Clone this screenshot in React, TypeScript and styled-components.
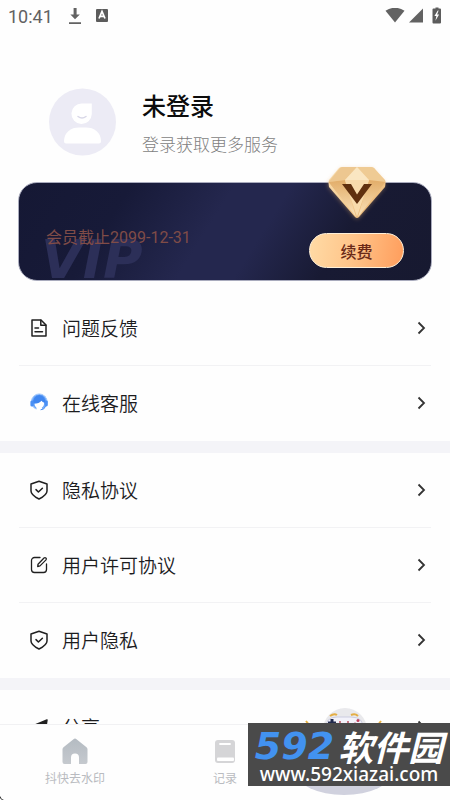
import React from "react";
import styled, { createGlobalStyle } from "styled-components";

const GlobalStyle = createGlobalStyle`
  * { box-sizing: border-box; }
  body {
    margin: 0;
    background: #fefefe;
    color: #1c1c1e;
    font-family: "Noto Sans CJK SC", sans-serif;
  }
  button { font: inherit; color: inherit; border: 0; background: none; padding: 0; cursor: pointer; }
`;

const Shell = styled.div`
  position: relative;
  display: flex;
  flex-direction: column;
  height: 100vh;
  overflow: hidden;
`;

const StatusBar = styled.header`
  display: flex;
  align-items: center;
  justify-content: space-between;
  flex: none;
  height: 32px;
  padding: 0 8px;
  color: #626262;
  font-family: Roboto, sans-serif;
  font-size: 18px;
`;

const StatusGroup = styled.div<{ $gap: number }>`
  display: flex;
  align-items: center;
  gap: ${(p) => p.$gap}px;
  svg { display: block; }
`;

const Content = styled.main`
  flex: 1;
  min-height: 0;
  overflow-y: auto;
  scrollbar-width: none;
`;

const Profile = styled.section`
  display: flex;
  align-items: center;
  gap: 26px;
  padding: 55px 49px 26px;
`;

const Avatar = styled.svg`
  flex: none;
  display: block;
  width: 67px;
  height: 68px;
`;

const ProfileText = styled.div`
  display: flex;
  flex-direction: column;
  gap: 11px;
  padding-top: 2px;
`;

const ProfileName = styled.h1`
  margin: 0;
  font-size: 24px;
  line-height: 32px;
  font-weight: 500;
  color: #0c0c0c;
`;

const ProfileHint = styled.p`
  margin: 0;
  font-size: 17px;
  line-height: 24px;
  font-weight: 300;
  color: #7e7e7e;
`;

const VipCard = styled.section`
  position: relative;
  display: flex;
  align-items: flex-end;
  justify-content: space-between;
  height: 99px;
  margin: 0 18px 10px;
  padding: 0 27px 12px;
  border: 1px solid #a9abbd;
  border-radius: 19px;
  background: linear-gradient(122deg, #151834 0%, #171a38 24%, #24274e 46%, #24274e 58%, #181a33 76%, #171930 100%);
`;

const VipMark = styled.span`
  position: absolute;
  left: 22px;
  bottom: 1px;
  font: italic 700 54px/38px "DejaVu Sans", sans-serif;
  color: #2c2f58;
`;

const Expiry = styled.p`
  position: relative;
  margin: 0 0 20px;
  font-family: Roboto, "Noto Sans CJK SC", sans-serif;
  font-size: 16px;
  line-height: 20px;
  color: #804c47;
`;

const RenewButton = styled.button`
  && {
    width: 95px;
    height: 35px;
    border: 1px solid #fff0d8;
    border-radius: 18px;
    background: linear-gradient(100deg, #ffdba6, #ffc58a 45%, #ff9d5c);
    color: #6b2a18;
    font-size: 16px;
    line-height: 32px;
    font-weight: 500;
  }
`;

const Diamond = styled.svg`
  position: absolute;
  top: -20px;
  right: 41px;
  width: 66px;
  height: 60px;
`;

const Group = styled.section`
  border-bottom: 12px solid #f4f4f8;
  &:last-child { border-bottom: 0; }
`;

const Row = styled.button`
  && {
    display: flex;
    align-items: center;
    gap: 14px;
    width: calc(100% - 38px);
    height: 75px;
    margin: 0 19px;
    padding: 0 5px 0 11px;
    border-bottom: 1px solid #f2f2f4;
    text-align: left;
  }
  &&:last-child { border-bottom-color: transparent; }
`;

const RowIcon = styled.svg`
  flex: none;
  width: 18px;
  height: 20px;
  fill: none;
  stroke: #202020;
  stroke-width: 1.5;
  stroke-linecap: round;
  stroke-linejoin: round;
`;

const RowLabel = styled.span`
  flex: 1;
  font-size: 19px;
  line-height: 26px;
  font-weight: 350;
`;

const Chevron = styled.svg`
  flex: none;
  width: 9px;
  height: 14px;
  fill: none;
  stroke: #333;
  stroke-width: 1.8;
`;

const TabBar = styled.nav`
  display: grid;
  grid-template-columns: repeat(3, 1fr);
  flex: none;
  height: 76px;
  border-top: 1px solid #f1f1f3;
  background: #fefefe;
`;

const Tab = styled.button`
  && {
    position: relative;
    display: flex;
    flex-direction: column;
    align-items: center;
    gap: 4px;
    padding-top: 12px;
    color: #b9bbc0;
    font-size: 12px;
    line-height: 18px;
  }
`;

const TabIcon = styled.svg`
  display: block;
  width: 28px;
  height: 28px;
`;

const Mascot = styled.svg`
  position: absolute;
  top: -21px;
  left: 50%;
  width: 100px;
  height: 92px;
  margin-left: -80px;
`;

const Watermark = styled.aside`
  position: absolute;
  right: 0;
  bottom: 14px;
  display: flex;
  flex-direction: column;
  align-items: center;
  width: 202px;
  height: 63px;
  padding-top: 7px;
  background: #4a4a4a;
  color: #fff;
  white-space: nowrap;
`;

const Brand = styled.div`
  display: flex;
  align-items: center;
  gap: 4px;
  height: 32px;
  font: italic 700 35px/32px "Noto Sans CJK SC", sans-serif;
`;

const BrandDigits = styled.span`
  color: #4292f0;
  font: italic 700 38px/32px "DejaVu Sans", sans-serif;
`;

const BrandUrl = styled.div`
  font: 500 19px/24px "Noto Sans", sans-serif;
`;

const Corner = styled.svg`
  position: absolute;
  left: 0;
  bottom: 0;
  width: 4px;
  height: 4px;
`;

type IconName = "doc" | "service" | "shield" | "edit" | "share";

function ItemIcon({ name }: { name: IconName }) {
  return (
    <RowIcon viewBox="0 0 18 20" aria-hidden="true">
      {name === "doc" && (
        <>
          <path d="M2 2h9l5 5v11H2z" />
          <path d="M10.800 2.200v5h5M5 10h3.500M5 13.700h7.500" />
        </>
      )}
      {name === "shield" && (
        <>
          <path d="M9 1.200 17 4v7c0 3.600-3.600 5.800-8 8-4.400-2.200-8-4.400-8-8V4z" />
          <path d="m6 9.600 2.400 2.400 4-3.800" />
        </>
      )}
      {name === "edit" && (
        <>
          <path strokeWidth="1.300" d="M10 2.500H4.500A3 3 0 0 0 1.500 5.500v9a3 3 0 0 0 3 3h9a3 3 0 0 0 3-3V9" />
          <path strokeWidth="1.300" d="m8 9.200 6-6.200q1-.8 1.900 0t.1 1.900l-6 6-2.300.6z" />
        </>
      )}
      {name === "service" && (
        <>
          <circle cx="9.300" cy="8.800" r="7.900" fill="#6ba6f8" stroke="#a9ccfb" strokeWidth="1" />
          <path d="M3.300 10.500a6.200 6.800 0 1 1 12 0z" fill="#3f86f0" stroke="none" />
          <rect x=".4" y="7.500" width="3.200" height="6" rx="1.500" fill="#4a90f5" stroke="none" />
          <rect x="14.900" y="7.500" width="2.900" height="6" rx="1.400" fill="#4a90f5" stroke="none" />
          <path d="M4.500 10.700q4.500 0 7-2.900 1 1.500 2.800 2-.2 3.700-2.500 5l.8 3.500q-3.500 1.300-6.500-.2l.5-3Q4.700 13.600 4.500 10.700z" fill="#fff" stroke="none" />
          <path d="M15.500 13.500q-1 3.300-4.500 3.300" stroke="#4a90f5" strokeWidth="1" />
        </>
      )}
      {name === "share" && (
        <path d="M17 3 2 9.200l4.500 2L15 5 9 12v5l3-3 3 1.500z" fill="#202020" />
      )}
    </RowIcon>
  );
}

function Item({ icon, label }: { icon: IconName; label: string }) {
  return (
    <Row type="button">
      <ItemIcon name={icon} />
      <RowLabel>{label}</RowLabel>
      <Chevron viewBox="0 0 9 14" aria-hidden="true">
        <path d="m1.500 1.500 5.500 5.500-5.500 5.500" />
      </Chevron>
    </Row>
  );
}

export default function App() {
  return (
    <>
      <GlobalStyle />
      <Shell>
        <StatusBar>
          <StatusGroup $gap={15}>
            <span>10:41</span>
            <StatusGroup $gap={14}>
              <svg width="14" height="18" viewBox="0 0 14 18">
                <path d="M5.600 1h3v6.500h3.200L7 12.300 2.400 7.500h3.200zM1 15.200h12V17H1z" fill="#626262" />
              </svg>
              <svg width="12" height="14" viewBox="0 0 12 14">
                <rect width="12" height="13" rx="1" fill="#5c5c5c" />
                <path d="m3 9.500 3-7 3 7M4.200 7.300h3.700" fill="none" stroke="#fff" strokeWidth="1.700" />
              </svg>
            </StatusGroup>
          </StatusGroup>
          <StatusGroup $gap={4}>
            <svg width="20" height="16" viewBox="0 0 20 16">
              <path d="M.5 2.700Q10-3.200 19.500 2.700L10 14.500z" fill="#626262" />
            </svg>
            <svg width="14" height="16" viewBox="0 0 14 16">
              <path d="M14 .5v14H0z" fill="#626262" />
            </svg>
            <svg width="15" height="18" viewBox="6 0 15 18">
              <path d="M12.500 1.500h2V.5h3v1h1.500q1 0 1 1v13q0 1-1 1h-6.500q-1 0-1-1v-13q0-1 1-1z" fill="#5c5c5c" />
              <path d="m16.800 3.500-3.400 5.500h2l-1 4.700 3.700-6.200h-2l1.500-4z" fill="#fff" />
            </svg>
          </StatusGroup>
        </StatusBar>

        <Content>
          <Profile>
            <Avatar viewBox="0 0 67 68" aria-hidden="true">
              <circle cx="33.500" cy="34" r="33.500" fill="#ecebf5" />
              <path d="M33 15.500h9.800V26A10.200 10.200 0 1 1 33 15.500z" fill="#fff" />
              <path d="M29 28.500q4 3 8 0" fill="none" stroke="#d9d8e8" strokeWidth="1.500" strokeLinecap="round" />
              <path d="M15 53.500C15 44 22 39.500 30 39.500h7c8 0 15 4.500 15 14q0 2-2 2H17q-2 0-2-2z" fill="#fff" />
            </Avatar>
            <ProfileText>
              <ProfileName>未登录</ProfileName>
              <ProfileHint>登录获取更多服务</ProfileHint>
            </ProfileText>
          </Profile>

          <VipCard>
            <VipMark aria-hidden="true">VIP</VipMark>
            <Expiry>会员截止2099-12-31</Expiry>
            <RenewButton type="button">续费</RenewButton>
            <Diamond viewBox="0 0 66 60" aria-hidden="true">
              <defs>
                <linearGradient id="gem" x1="0" y1="0" x2="1" y2="1">
                  <stop offset="0" stopColor="#f7dcae" />
                  <stop offset=".5" stopColor="#f5cf95" />
                  <stop offset="1" stopColor="#e3a762" />
                </linearGradient>
                <linearGradient id="facet" x1="0" y1="0" x2="0" y2="1">
                  <stop offset="0" stopColor="#e2ad69" />
                  <stop offset="1" stopColor="#fbe3bb" />
                </linearGradient>
                <filter id="glow" x="-30%" y="-30%" width="160%" height="160%">
                  <feGaussianBlur stdDeviation="2" />
                </filter>
              </defs>
              <path d="M17 5h31l13 14v5L35 55q-2 2-4 0L4 24v-5z" fill="#e8b06e" opacity=".4" filter="url(#glow)" />
              <path d="M18 4h29q2 0 3 1l11 12q1 2 0 7L35 54q-2 2-4 0L5 24q-1-4 0-7L15 5q1-1 3-1z" fill="url(#gem)" />
              <path d="M16 5 4.500 19 21 17 33 4H18z" fill="#edc790" />
              <path d="m33 4 12 13 16.500 2L50 5l-3-1z" fill="#efcb94" />
              <path d="M33 4 21 17h24z" fill="#fae6c2" />
              <path d="M4.500 19 21 17l11 37z" fill="url(#facet)" />
              <path d="m61.500 19-16.500-2-11 37z" fill="url(#facet)" />
              <path d="m21 17 12 37 12-37z" fill="#f8dbac" />
              <path d="M18 21h9l6 10.500L40 21h8L33 41z" fill="#60300f" />
            </Diamond>
          </VipCard>

          <Group>
            <Item icon="doc" label="问题反馈" />
            <Item icon="service" label="在线客服" />
          </Group>
          <Group>
            <Item icon="shield" label="隐私协议" />
            <Item icon="edit" label="用户许可协议" />
            <Item icon="shield" label="用户隐私" />
          </Group>
          <Group>
            <Item icon="share" label="分享" />
          </Group>
        </Content>

        <TabBar>
          <Tab type="button">
            <TabIcon viewBox="0 0 28 28" aria-hidden="true">
              <defs>
                <linearGradient id="home" x1="0" y1="0" x2="0" y2="1">
                  <stop offset="0" stopColor="#b4bbc2" />
                  <stop offset="1" stopColor="#c5c9ce" />
                </linearGradient>
              </defs>
              <path d="M12.500 2.200q1.500-1.200 3 0l10 8q1 .8 1 2V25q0 2-2 2H18v-6.500a4 4 0 0 0-8 0V27H3.500q-2 0-2-2V12.200q0-1.200 1-2z" fill="url(#home)" />
            </TabIcon>
            抖快去水印
          </Tab>
          <Tab type="button">
            <TabIcon viewBox="0 0 28 28" aria-hidden="true">
              <rect x="4" y="3" width="20" height="23" rx="3" fill="#d5d5d7" />
              <path d="M9 7h10" stroke="#fff" strokeWidth="1.800" strokeLinecap="round" />
              <rect x="6" y="20.500" width="17" height="3.500" rx="1" fill="#fff" />
            </TabIcon>
            记录
          </Tab>
          <Tab type="button" aria-label="游戏">
            <Mascot viewBox="0 0 100 92" aria-hidden="true">
              <ellipse cx="49" cy="68" rx="48" ry="23" fill="#d0d1de" />
              <circle cx="50" cy="26" r="22" fill="#e9e9ec" />
              <path d="M35 12q4-3 7-1M56 11q4-2 7 1" fill="none" stroke="#e4ae45" strokeWidth="2" />
              <path d="M31 25q-1-12 11-12h14q13 0 12 12z" fill="#f2f2fa" stroke="#cbcce0" />
              <path d="M33 19h8M37 15v8" stroke="#222b4e" strokeWidth="3" />
              <path d="M44 18h2M52 18h2" stroke="#bd5260" strokeWidth="1.500" />
              <circle cx="60" cy="20" r="1.500" fill="#bf3f5d" />
              <circle cx="63" cy="16.500" r="1.500" fill="#bf3f5d" />
              <path d="m11 17 4 5M9 21l5 1M86 17l-4 5M88 21l-4 1" stroke="#e8b13e" strokeWidth="2" />
            </Mascot>
          </Tab>
        </TabBar>

        <Watermark>
          <Brand>
            <BrandDigits>592</BrandDigits>
            <span>软件园</span>
          </Brand>
          <BrandUrl>www.592xiazai.com</BrandUrl>
        </Watermark>
        <Corner viewBox="0 0 4 4" aria-hidden="true">
          <path d="M0 0q1 3 4 4H2L0 2z" fill="#222" />
        </Corner>
      </Shell>
    </>
  );
}
